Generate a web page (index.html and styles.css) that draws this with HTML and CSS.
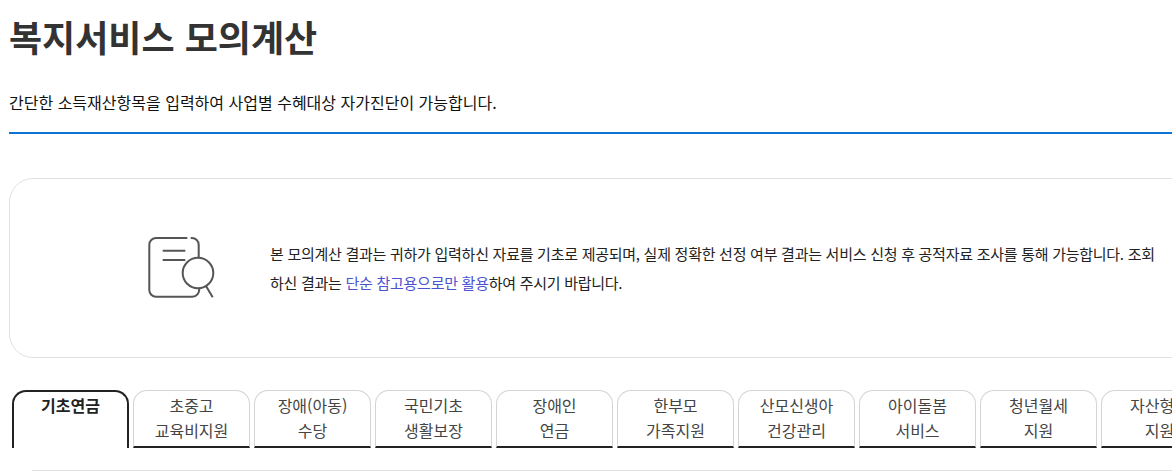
FILE: index.html
```html
<!DOCTYPE html>
<html lang="ko">
<head>
    <meta charset="UTF-8">
    <meta name="viewport" content="width=device-width, initial-scale=1.0">
    <title>복지서비스 모의계산</title>
    <link rel="stylesheet" href="styles.css">
</head>
<body>
    <div class="page">
        <header class="page-head">
            <h1>복지서비스 모의계산</h1>
            <p>간단한 소득재산항목을 입력하여 사업별 수혜대상 자가진단이 가능합니다.</p>
        </header>

        <div class="notice">
            <svg class="notice-icon" width="70" height="66" viewBox="0 0 70 66" fill="none" stroke="#555" stroke-width="2">
                <path d="M41.3 3H10a6.7 6.7 0 0 0-6.7 6.7v45.3a6.7 6.7 0 0 0 6.7 6.7h36a7 7 0 0 0 7-8.7"/>
                <path d="M44.7 3h1.3a6.7 6.7 0 0 1 6.7 6.7v12.600"/>
                <path d="M16.700 15.700h22.600M16.700 25h22.600"/>
                <circle cx="52" cy="38" r="15.300"/>
                <path d="M60 51l6.700 11.300"/>
            </svg>
            <p>본 모의계산 결과는 귀하가 입력하신 자료를 기초로 제공되며, 실제 정확한 선정 여부 결과는 서비스 신청 후 공적자료 조사를 통해 가능합니다. 조회하신 결과는 <span class="point">단순 참고용으로만 활용</span>하여 주시기 바랍니다.</p>
        </div>

        <ul class="tabs">
            <li class="tab active"><a href="#">기초연금</a></li>
            <li class="tab"><a href="#">초중고<br>교육비지원</a></li>
            <li class="tab"><a href="#">장애(아동)<br>수당</a></li>
            <li class="tab"><a href="#">국민기초<br>생활보장</a></li>
            <li class="tab"><a href="#">장애인<br>연금</a></li>
            <li class="tab"><a href="#">한부모<br>가족지원</a></li>
            <li class="tab"><a href="#">산모신생아<br>건강관리</a></li>
            <li class="tab"><a href="#">아이돌봄<br>서비스</a></li>
            <li class="tab"><a href="#">청년월세<br>지원</a></li>
            <li class="tab"><a href="#">자산형성<br>지원</a></li>
        </ul>

        <div class="tab-body"></div>
    </div>
</body>
</html>
```

FILE: styles.css
```css
html, body {
    margin: 0;
    padding: 0;
    height: 471px;
    overflow: hidden;
    background-color: #fff;
}
body {
    font-family: "Noto Sans CJK KR", "Noto Sans", sans-serif;
    color: #222;
}
.page {
    width: 1300px;
    padding-left: 9px;
}
.page-head {
    width: 1163px;
    height: 132px;
    border-bottom: 2px solid #0a75d2;
}
.page-head h1 {
    margin: 0;
    padding-top: 11px;
    font-size: 36px;
    line-height: 50px;
    font-weight: 700;
    color: #333;
}
.page-head p {
    margin: 0;
    padding-top: 28px;
    font-size: 16px;
    line-height: 26px;
    color: #111;
}
.notice {
    display: flex;
    align-items: center;
    box-sizing: border-box;
    width: 1240px;
    height: 180px;
    margin-top: 44px;
    padding-left: 136px;
    border: 1px solid #e2e2e2;
    border-radius: 24px;
}
.notice-icon {
    flex: none;
    margin-right: 54px;
}
.notice p {
    width: 888px;
    margin: 0;
    font-size: 15px;
    line-height: 29px;
    letter-spacing: -0.27px;
    color: #222;
}
.point {
    color: #4a52d0;
}
.tabs {
    display: flex;
    gap: 4px;
    height: 58px;
    margin: 32px 0 0;
    padding: 0 0 0 3px;
    list-style: none;
}
.tab {
    flex: none;
    box-sizing: border-box;
    width: 117px;
    height: 58px;
    padding-top: 2px;
    border: 1px solid #d4d4d4;
    border-bottom: 2px solid #222;
    border-radius: 14px 14px 0 0;
    text-align: center;
    font-size: 16px;
    line-height: 25px;
}
.tab a {
    color: #444;
    text-decoration: none;
}
.tab.active {
    border: 2px solid #222;
    border-bottom: none;
    padding-top: 1px;
}
.tab.active a {
    color: #222;
    font-weight: 700;
}
.tab-body {
    margin: 22px 0 0 23px;
    border-top: 1px solid #e2e2e2;
}
```
